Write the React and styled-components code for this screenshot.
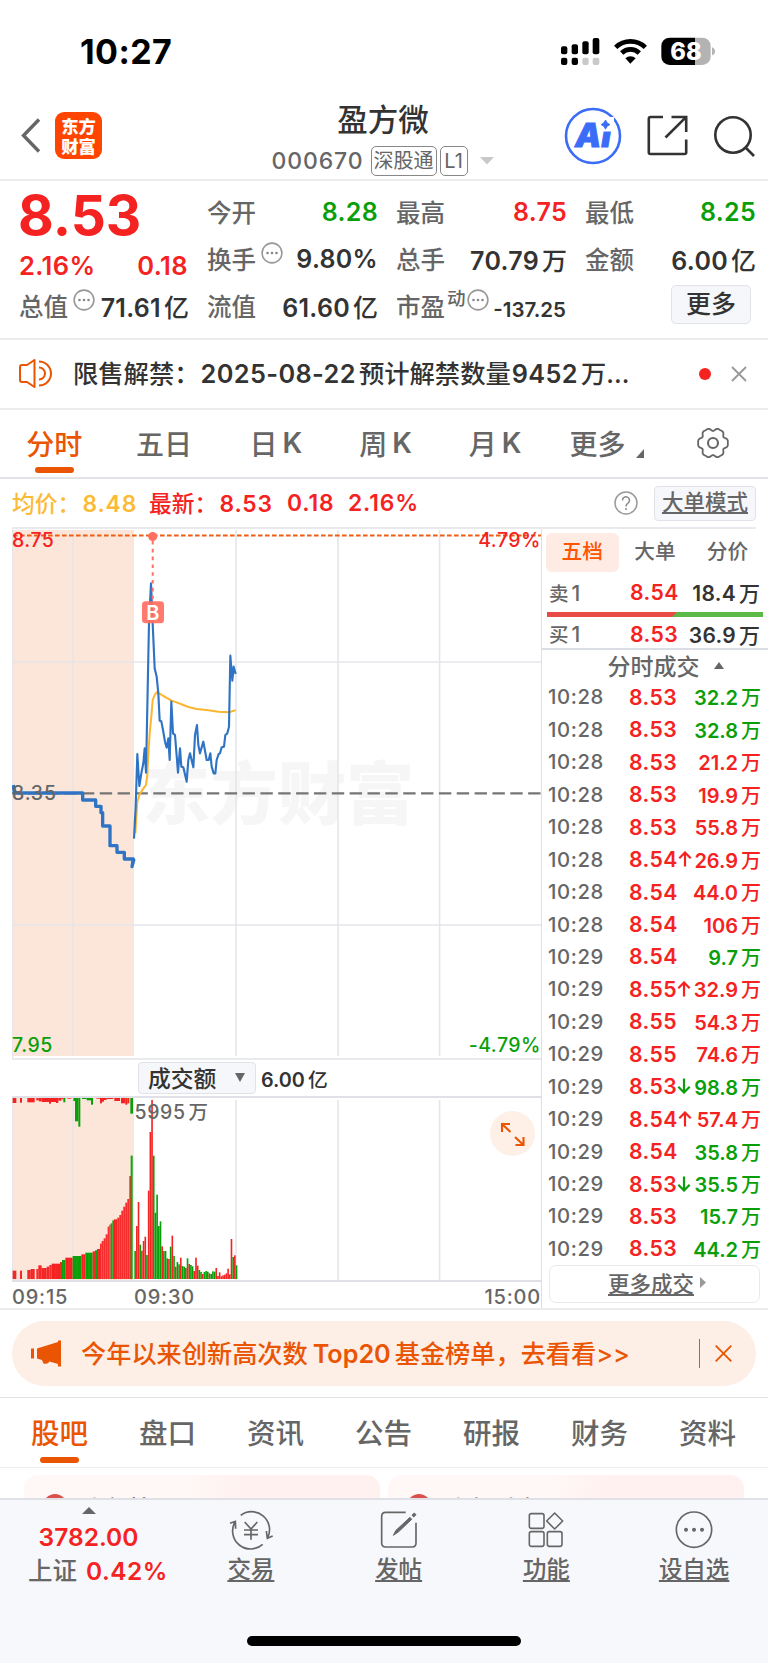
import React from 'react';
import styled, { createGlobalStyle } from 'styled-components';

const RED = '#f52222';
const GREEN = '#0a9f0a';
const ORANGE = '#ea5504';

const quotes = [
  [
    { label: '今开', value: '8.28', color: GREEN },
    { label: '最高', value: '8.75', color: RED },
    { label: '最低', value: '8.25', color: GREEN },
  ],
  [
    { label: '换手', value: '9.80%', tip: true },
    { label: '总手', value: '70.79', unit: '万' },
    { label: '金额', value: '6.00', unit: '亿' },
  ],
];

const trades = [
  ['10:28', '8.53', '', '32.2', 'g'],
  ['10:28', '8.53', '', '32.8', 'g'],
  ['10:28', '8.53', '', '21.2', 'r'],
  ['10:28', '8.53', '', '19.9', 'r'],
  ['10:28', '8.53', '', '55.8', 'r'],
  ['10:28', '8.54', 'up', '26.9', 'r'],
  ['10:28', '8.54', '', '44.0', 'r'],
  ['10:28', '8.54', '', '106', 'r'],
  ['10:29', '8.54', '', '9.7', 'g'],
  ['10:29', '8.55', 'up', '32.9', 'r'],
  ['10:29', '8.55', '', '54.3', 'r'],
  ['10:29', '8.55', '', '74.6', 'r'],
  ['10:29', '8.53', 'down', '98.8', 'g'],
  ['10:29', '8.54', 'up', '57.4', 'r'],
  ['10:29', '8.54', '', '35.8', 'g'],
  ['10:29', '8.53', 'down', '35.5', 'g'],
  ['10:29', '8.53', '', '15.7', 'g'],
  ['10:29', '8.53', '', '44.2', 'g'],
];

// x start, x end, bar top, color (3x units, baseline 717)
const preBars = [
  [38, 49, 692, 'r'], [60, 66, 692, 'r'], [82, 92, 690, 'r'], [92, 104, 687, 'r'],
  [109, 115, 687, 'r'], [115, 125, 676, 'r'], [125, 140, 684, 'r'], [140, 148, 680, 'r'],
  [148, 155, 675, 'r'], [155, 180, 671, 'r'], [180, 186, 666, 'r'], [186, 196, 660, 'g'],
  [196, 218, 653, 'r'], [218, 244, 648, 'g'], [244, 256, 643, 'r'], [256, 278, 638, 'g'],
  [278, 285, 634, 'r'], [285, 291, 631, 'g'], [291, 300, 627, 'r'], [300, 305, 611, 'r'],
  [305, 311, 603, 'r'], [311, 317, 595, 'r'], [317, 323, 583, 'r'], [323, 328, 560, 'r'],
  [328, 332, 554, 'r'], [332, 337, 550, 'g'], [337, 342, 541, 'g'], [342, 352, 538, 'r'],
  [352, 358, 533, 'r'], [358, 364, 525, 'r'], [364, 370, 512, 'r'], [370, 376, 500, 'r'],
  [376, 382, 488, 'r'], [382, 388, 477, 'r'], [388, 393, 408, 'r'], [392, 398, 347, 'g'],
];

// hanging bars under the top edge of the auction area
const topBars = [
  [38, 49, 189, 'r'], [60, 66, 188, 'r'], [82, 104, 187, 'r'], [109, 116, 181, 'r'],
  [116, 125, 184, 'r'], [125, 147, 186, 'r'], [147, 153, 191, 'r'], [153, 168, 186, 'r'],
  [168, 175, 189, 'r'], [175, 184, 182, 'r'], [184, 190, 178, 'r'], [190, 196, 187, 'g'],
  [202, 214, 176, 'r'], [220, 226, 183, 'g'], [225, 235, 244, 'g'], [235, 241, 260, 'g'],
  [246, 260, 177, 'g'], [260, 273, 181, 'g'], [273, 279, 194, 'g'], [289, 300, 176, 'r'],
  [300, 306, 190, 'r'], [306, 312, 185, 'r'], [312, 320, 180, 'r'], [320, 340, 177, 'r'],
  [343, 360, 183, 'r'], [363, 376, 190, 'r'], [376, 382, 194, 'r'], [382, 388, 190, 'r'],
  [391, 399, 221, 'g'],
];

const minuteBars =
  'g633 r558 r486 g614 r632 r603 r590 g645 r452 r276 r180 g347 g518 g464 g558 g544 r619 g633 g633 g655 r657 g620 r587 g648 r680 g666 g673 r653 g678 g680 r684 g655 r672 g675 g679 r693 r653 r677 g690 g696 r702 g696 g693 g695 r700 g702 g694 g695 r684 r708 r697 r709 r706 r704 r700 r686 r703 r597 g651 r646 g676'.split(' ');

const PRICE =
  '102,836 107,740 112,582 118,678 124,640 130,610 134,565 138,638 147,190 153,70 158,190 164,325 170,350 175,400 179,482 184,484 189,510 195,545 200,563 205,535 209,600 214,425 219,520 225,525 234,638 240,565 244,620 250,622 260,665 265,600 270,580 280,622 285,525 291,495 295,555 300,580 310,545 320,600 326,600 331,580 335,620 341,640 346,640 350,600 356,582 360,580 365,562 372,560 376,525 382,520 387,500 391,287 397,362 401,320 407,342';
const AVERAGE =
  '106,820 109,770 112,725 118,705 124,695 132,683 138,675 142,645 144,600 149,520 154,470 158,420 164,405 170,397 178,400 190,408 203,415 214,422 230,427 250,435 265,441 290,447 320,450 355,455 388,457 398,453 407,451';
const AUCTION =
  '40,435 43,459 248,459 248,480 287,480 287,499 303,499 303,518 308,518 308,558 330,558 330,617 351,617 351,637 373,637 373,657 400,657 396,680 402,657';

const gearPoints = Array.from({ length: 72 }, (_, i) => {
  const a = (i * Math.PI) / 36;
  const r = 14 + 1.4 * Math.cos(6 * a) - 0.6 * Math.cos(12 * a);
  return `${(17 + r * Math.cos(a)).toFixed(2)},${(17 + r * Math.sin(a)).toFixed(2)}`;
}).join(' ');

const tone = (c) => (c === 'g' ? '#0a9f0a' : '#f52222');

const Tip = () => (
  <TipIcon viewBox="0 0 22 22">
    <circle cx="11" cy="11" r="9.9" fill="none" stroke="#999" strokeWidth="1.6" />
    <circle cx="6.5" cy="11" r="1.3" fill="#888" />
    <circle cx="11" cy="11" r="1.3" fill="#888" />
    <circle cx="15.5" cy="11" r="1.3" fill="#888" />
  </TipIcon>
);

const StatusIcons = () => (
  <svg width="157" height="29" viewBox="530 110 471 87">
    <rect x="533" y="138" width="19" height="24" rx="6" />
    <rect x="565" y="132" width="19" height="30" rx="6" />
    <rect x="597" y="123" width="19" height="39" rx="6" />
    <rect x="628" y="113" width="20" height="49" rx="6" />
    <rect x="533" y="172" width="19" height="22" rx="6" />
    <rect x="565" y="172" width="19" height="22" rx="6" />
    <rect x="597" y="172" width="19" height="22" rx="6" fill="#c9c9c9" />
    <rect x="628" y="172" width="20" height="22" rx="6" fill="#c9c9c9" />
    <g fill="none" stroke="#000" strokeWidth="14">
      <path d="M697 141a64 64 0 0 1 89 0" />
      <path d="M715 158a38 38 0 0 1 53 0" />
    </g>
    <path d="M726 174a22 22 0 0 1 31 0l-16 16z" />
    <path d="M859 112h76v82h-76a25 25 0 0 1-25-25v-32a25 25 0 0 1 25-25z" />
    <path d="M935 112h22a25 25 0 0 1 25 25v32a25 25 0 0 1-25 25h-22z" fill="#b3b3b3" />
    <path d="M986 141q9 3 9 12t-9 12z" fill="#b3b3b3" />
    <text x="908" y="179" textAnchor="middle" fontFamily="Inter" fontSize="71" fontWeight="800" fill="#fff">68</text>
  </svg>
);

const PriceChart = () => (
  <svg width="530" height="529" viewBox="12 529 530 529">
    <rect x="13" y="530" width="121" height="526" fill="#fce6da" />
    <text x="142" y="819" fontFamily="Noto Sans CJK SC" fontWeight="900" fontSize="68" fill="#f6f6f7">东方财富</text>
    <g stroke="#e4e6ea" strokeWidth="1.6">
      <path d="M12.5 529V1058" />
      <path d="M73 530V1056M236 530V1056M338 530V1056M439.6 530V1056M13 662H541M13 925H541" />
    </g>
    <path d="M10.5 793.3H541" stroke="#757575" strokeWidth="2.2" strokeDasharray="12.4 5.45" />
    <path d="M13 535.4H541" stroke="#ee5e14" strokeWidth="2" strokeDasharray="4.6 2.4" />
    <g transform="translate(100 560) scale(.33333)" fill="none" strokeLinejoin="round">
      <polyline points={AVERAGE} stroke="#fcb52f" strokeWidth="6" />
      <polyline points={PRICE} stroke="#2f74c4" strokeWidth="6.4" />
    </g>
    <g transform="translate(0 640) scale(.33333)" fill="none">
      <polyline points={AUCTION} stroke="#2f74c4" strokeWidth="10" strokeLinejoin="round" />
    </g>
    <path d="M152.7 541V602" stroke="#ff6f61" strokeWidth="2" strokeDasharray="3.6 4.2" />
    <circle cx="152.7" cy="536.5" r="4.5" fill="#ff6f61" />
    <rect x="142" y="601.3" width="22" height="22" rx="3.5" fill="#ff6f61" fillOpacity=".92" />
    <text x="152.8" y="619.5" textAnchor="middle" fontFamily="Inter" fontWeight="600" fontSize="20" fill="#fff">B</text>
    <g fontFamily="Inter" fontSize="19.5" fontWeight="500" letterSpacing=".5">
      <text x="12" y="547" fill="#f52222">8.75</text>
      <text x="541" y="547" textAnchor="end" fill="#f52222">4.79%</text>
      <text x="12" y="800" letterSpacing=".8" fill="#666">8.35</text>
      <text x="12" y="1051.5" fill="#0a9f0a">7.95</text>
      <text x="541" y="1051.5" textAnchor="end" fill="#0a9f0a">-4.79%</text>
    </g>
  </svg>
);

const VolumeChart = () => (
  <svg width="530" height="182" viewBox="12 1098 530 182">
    <rect x="13" y="1098" width="121" height="182" fill="#fce6da" />
    <path d="M12.5 1098V1280M73 1100V1280M236 1100V1280M338 1100V1280M439.6 1100V1280" stroke="#e4e6ea" strokeWidth="1.6" />
    <g transform="translate(0 1040) scale(.33333)">
      {preBars.map(([x, end, y, c]) => (
        <rect key={x} x={x} y={y} width={end - x} height={717 - y} fill={tone(c)} />
      ))}
      {preBars.map(([x, end, y]) => (
        <path key={x} d={`M${(x + end) / 2} ${y}V717`} stroke="#fff" strokeOpacity=".2" strokeWidth="1" />
      ))}
      {topBars.map(([x, end, y, c]) => (
        <rect key={x} x={x} y="174" width={end - x} height={y - 174} fill={tone(c)} />
      ))}
      {minuteBars.map((bar, i) => (
        <rect key={i} x={403 + i * 5.07} y={bar.slice(1)} width="4.9" height={717 - bar.slice(1)} fill={tone(bar[0])} />
      ))}
    </g>
    <text x="134.5" y="1119" fontFamily="Inter, 'Noto Sans CJK SC'" fontSize="19.5" fontWeight="500" letterSpacing=".6" fill="#666">
      5995<tspan dx="3">万</tspan>
    </text>
    <circle cx="512.5" cy="1133.5" r="22.5" fill="#feefe7" />
    <g fill="none" stroke="#ea5504" strokeWidth="2.1">
      <path d="M502 1132V1124H510M502 1124L510.500 1132" />
      <path d="M523.500 1137V1145H515.500M523.500 1145L515 1137" />
    </g>
  </svg>
);

const App = () => (
  <Page>
    <GlobalStyle />
    <StatusBar>
      <Clock>10:27</Clock>
      <StatusIcons />
    </StatusBar>

    <Header>
      <HeaderLeft>
        <svg width="20" height="35" viewBox="0 0 20 35">
          <path d="M18 1.500L2.500 17.500L18 33.500" fill="none" stroke="#666" strokeWidth="3.4" />
        </svg>
        <Logo>
          <span>东方</span>
          <span>财富</span>
        </Logo>
      </HeaderLeft>
      <Heading>
        <StockName>盈方微</StockName>
        <StockCode>
          <span>000670</span>
          <Badge $w={66}>深股通</Badge>
          <Badge $w={28}>L1</Badge>
          <svg width="14" height="8" viewBox="0 0 14 8">
            <path d="M0 0H14L7 7.500z" fill="#c8c8c8" />
          </svg>
        </StockCode>
      </Heading>
      <HeaderRight>
        <svg width="58" height="58" viewBox="0 0 58 58">
          <circle cx="29" cy="29" r="27" fill="none" stroke="#3a6cf8" strokeWidth="2.6" />
          <text x="11" y="40.300" fontFamily="Inter" fontSize="33" fontWeight="900" fontStyle="italic" fill="#3a6cf8" stroke="#3a6cf8" strokeWidth=".8">Ai</text>
          <rect x="36" y="10" width="14" height="14.500" fill="#fff" />
          <path d="M41.500 13q1.100 3.500 4.500 4.600q-3.400 1.100-4.500 4.600q-1.100-3.500-4.500-4.600q3.400-1.100 4.500-4.600z" fill="#3a6cf8" stroke="#3a6cf8" strokeWidth=".8" />
        </svg>
        <svg width="41" height="41" viewBox="0 0 41 41" fill="none" stroke="#333" strokeWidth="2.6">
          <path d="M16 2H3.500Q1.800 2 1.800 3.700V37.500Q1.800 39 3.500 39H37.500Q39.200 39 39.200 37.500V24.500" />
          <path d="M24.500 2H39.200V17M38.500 2.700L18.500 22.500" />
        </svg>
        <svg width="42" height="42" viewBox="0 0 42 42" fill="none" stroke="#333" strokeWidth="2.6">
          <circle cx="20" cy="20" r="17.700" />
          <path d="M32 32L41 41" />
        </svg>
      </HeaderRight>
    </Header>

    <Quote>
      <QuoteMain>
        <BigPrice>8.53</BigPrice>
        <Change>
          <span>2.16%</span>
          <span>0.18</span>
        </Change>
        <QuoteCell>
          <QuoteLabel>总值</QuoteLabel>
          <Tip />
          <QuoteValue>71.61<Unit>亿</Unit></QuoteValue>
        </QuoteCell>
      </QuoteMain>
      <QuoteGrid>
        {quotes.flat().map((q) => (
          <QuoteCell key={q.label}>
            <QuoteLabel>{q.label}</QuoteLabel>
            {q.tip && <Tip />}
            <QuoteValue $color={q.color}>
              {q.value}
              {q.unit && <Unit>{q.unit}</Unit>}
            </QuoteValue>
          </QuoteCell>
        ))}
        <QuoteCell>
          <QuoteLabel>流值</QuoteLabel>
          <QuoteValue>61.60<Unit>亿</Unit></QuoteValue>
        </QuoteCell>
        <QuoteCell>
          <QuoteLabel>市盈</QuoteLabel>
          <Sup>动</Sup>
          <Tip />
          <SmallValue>-137.25</SmallValue>
        </QuoteCell>
        <QuoteCell>
          <MoreButton>更多</MoreButton>
        </QuoteCell>
      </QuoteGrid>
    </Quote>

    <Notice>
      <svg width="34" height="29" viewBox="0 0 34 29" fill="none" stroke={ORANGE} strokeWidth="2" strokeLinejoin="round">
        <path d="M3 6H8L15.500 1V28L8 23H3Q1 23 1 21V8Q1 6 3 6z" />
        <path d="M20 8.500a6 6 0 0 1 0 12M20 2.500a12 12 0 0 1 0 24" />
      </svg>
      <NoticeText>限售解禁：<b>2025-08-22</b>预计解禁数量<b>9452</b>万...</NoticeText>
      <RedDot />
      <svg width="16" height="16" viewBox="0 0 16 16">
        <path d="M1 1L15 15M15 1L1 15" stroke="#999" strokeWidth="1.9" />
      </svg>
    </Notice>

    <PeriodTabs>
      <PeriodTab $active>分时</PeriodTab>
      <PeriodTab>五日</PeriodTab>
      <PeriodTab>日<i>K</i></PeriodTab>
      <PeriodTab>周<i>K</i></PeriodTab>
      <PeriodTab>月<i>K</i></PeriodTab>
      <PeriodTab>
        更多
        <CornerMark viewBox="0 0 8 9"><path d="M8 0V9H0z" fill="#666" /></CornerMark>
      </PeriodTab>
      <PeriodTab>
        <svg width="34" height="34" viewBox="0 0 34 34" fill="none" stroke="#666" strokeWidth="1.8">
          <polygon points={gearPoints} strokeLinejoin="round" />
          <circle cx="17" cy="17" r="5" strokeWidth="2.1" />
        </svg>
      </PeriodTab>
    </PeriodTabs>

    <InfoRow>
      <InfoText $color="#fcbb36" $w={137}>均价：<span>8.48</span></InfoText>
      <InfoText $color={RED} $w={136}>最新：<span>8.53</span></InfoText>
      <InfoText $color={RED} $w={61}><span>0.18</span></InfoText>
      <InfoText $color={RED}><span>2.16%</span></InfoText>
      <HelpIcon viewBox="0 0 24 24">
        <circle cx="12" cy="12" r="11" fill="none" stroke="#999" strokeWidth="1.5" />
        <path d="M8.500 9.500a3.500 3.500 0 1 1 5.500 2.700q-2 1.300-2 3.300" fill="none" stroke="#888" strokeWidth="1.500" />
        <circle cx="12" cy="18" r="1" fill="#888" />
      </HelpIcon>
      <ModeButton>大单模式</ModeButton>
    </InfoRow>

    <Market>
      <ChartColumn>
        <PriceChart />
        <VolumeHead>
          <Dropdown>
            成交额
            <svg width="10" height="9" viewBox="0 0 10 9"><path d="M0 0H10L5 9z" fill="#666" /></svg>
          </Dropdown>
          <span>6.00<Unit>亿</Unit></span>
        </VolumeHead>
        <VolumeChart />
        <TimeAxis>
          <AxisLabel $w={122}>09:15</AxisLabel>
          <AxisLabel>09:30</AxisLabel>
          <AxisLabel $end>15:00</AxisLabel>
        </TimeAxis>
      </ChartColumn>

      <SideColumn>
        <BookTabs>
          <BookTab $active>五档</BookTab>
          <BookTab>大单</BookTab>
          <BookTab>分价</BookTab>
        </BookTabs>
        <BookRow>
          <BookName>卖<span>1</span></BookName>
          <Price>8.54</Price>
          <BookVolume>18.4<Unit>万</Unit></BookVolume>
        </BookRow>
        <RatioBar viewBox="0 0 216 5" preserveAspectRatio="none">
          <rect width="216" height="5" fill="#5bb947" />
          <path d="M0 0H130L125 5H0z" fill="#e84a45" />
        </RatioBar>
        <BookRow>
          <BookName>买<span>1</span></BookName>
          <Price>8.53</Price>
          <BookVolume>36.9<Unit>万</Unit></BookVolume>
        </BookRow>
        <TradeTitle>
          分时成交
          <svg width="10" height="7" viewBox="0 0 10 7"><path d="M5 0L10 7H0z" fill="#666" /></svg>
        </TradeTitle>
        <TradeList>
          {trades.map(([time, price, dir, volume, c], i) => (
            <TradeRow key={i}>
              <TradeTime>{time}</TradeTime>
              <Price>{price}</Price>
              {dir && (
                <Arrow viewBox="0 0 14 16" $down={dir === 'down'}>
                  <path d="M7 15.500V1.500M1.300 7.200L7 1.500L12.700 7.200" fill="none" stroke={dir === 'up' ? RED : GREEN} strokeWidth="2.2" />
                </Arrow>
              )}
              <TradeVolume $color={tone(c)}>{volume}<Unit>万</Unit></TradeVolume>
            </TradeRow>
          ))}
        </TradeList>
        <MoreTrades>
          <u>更多成交</u>
          <svg width="6" height="11" viewBox="0 0 6 11"><path d="M0 0L6 5.500L0 11z" fill="#999" /></svg>
        </MoreTrades>
      </SideColumn>
    </Market>

    <Banner>
      <svg width="31" height="27" viewBox="0 0 31 27" fill={ORANGE}>
        <path d="M0 8.500H3V18.500H0zM6 8.500L27 2V.5H30V26.500H27V24L18.500 21.500Q17 24.500 12.500 23.500L11 20L6 18.500z" />
      </svg>
      <BannerText>今年以来创新高次数<b>Top20</b>基金榜单，去看看&gt;&gt;</BannerText>
      <BannerRule />
      <svg width="17" height="17" viewBox="0 0 17 17">
        <path d="M.7 .7L16.300 16.300M16.300 .7L.7 16.300" stroke={ORANGE} strokeWidth="1.8" />
      </svg>
    </Banner>

    <SectionTabs>
      {['股吧', '盘口', '资讯', '公告', '研报', '财务', '资料'].map((name, i) => (
        <SectionTab key={name} $active={i === 0}>{name}</SectionTab>
      ))}
    </SectionTabs>

    <Cards>
      <Card>
        <CardDot />
        <span>人气榜</span>
      </Card>
      <Card>
        <CardDot />
        <span>人气看点</span>
      </Card>
    </Cards>

    <BottomBar>
      <IndexCell>
        <svg width="14" height="7" viewBox="0 0 14 7"><path d="M7 0L14 7H0z" fill="#666" /></svg>
        <IndexValue>3782.00</IndexValue>
        <IndexChange>上证<b>0.42%</b></IndexChange>
      </IndexCell>
      <NavItem>
        <svg width="44" height="40" viewBox="0 0 132 120" fill="none" stroke="#666" strokeWidth="5">
          <path d="M35 16A54 54 0 0 1 116 83M112 63L115 85L131 78" />
          <path d="M101 103A54 54 0 0 1 18 36M20 56L19 34L3 40" />
          <path d="M47 36L66 57L85 36M66 57V89M45 60H87M45 74H87" />
        </svg>
        <u>交易</u>
      </NavItem>
      <NavItem>
        <svg width="38" height="40" viewBox="0 0 114 120" fill="none" stroke="#666" strokeWidth="5">
          <path d="M77 7H17Q5 7 5 19V99Q5 111 17 111H97Q108 111 108 99V38" />
          <path d="M40 76L48 61L90 22L95 28L55 66z" fill="#666" strokeWidth="3" />
          <path d="M98 19L106 11" strokeWidth="10" />
        </svg>
        <u>发帖</u>
      </NavItem>
      <NavItem>
        <svg width="36" height="40" viewBox="0 0 108 120" fill="none" stroke="#666" strokeWidth="4.8" strokeLinejoin="round">
          <rect x="4" y="11" width="44" height="44" rx="6" />
          <rect x="4" y="65" width="44" height="44" rx="6" />
          <rect x="58" y="65" width="44" height="44" rx="6" />
          <path d="M80 9L104 33L80 57L56 33z" />
        </svg>
        <u>功能</u>
      </NavItem>
      <NavItem>
        <svg width="40" height="40" viewBox="0 0 120 120">
          <circle cx="60" cy="59" r="53" fill="none" stroke="#666" strokeWidth="5" />
          <circle cx="36" cy="59" r="6" fill="#666" />
          <circle cx="60" cy="59" r="6" fill="#666" />
          <circle cx="84" cy="59" r="6" fill="#666" />
        </svg>
        <u>设自选</u>
      </NavItem>
      <HomeIndicator />
    </BottomBar>
  </Page>
);

export default App;

const GlobalStyle = createGlobalStyle`
  * { box-sizing: border-box; }
  body {
    margin: 0;
    background: #fff;
    font-family: Inter, 'Noto Sans CJK SC', sans-serif;
    font-weight: 500;
    color: #333;
  }
  svg { display: block; flex-shrink: 0; }
`;

const Page = styled.div`
  width: 768px;
  height: 1663px;
  overflow: hidden;
  display: flex;
  flex-direction: column;
  white-space: nowrap;
  > * { flex-shrink: 0; }
`;

const StatusBar = styled.div`
  height: 90px;
  padding: 12px 51px 0 80px;
  display: flex;
  justify-content: space-between;
  align-items: center;
`;

const Clock = styled.div`
  font-size: 34px;
  font-weight: 700;
  color: #000;
  letter-spacing: 0.4px;
`;

const Header = styled.div`
  height: 91px;
  padding: 0 12px;
  display: grid;
  grid-template-columns: 1fr auto 1fr;
  align-items: center;
  border-bottom: 2px solid #ececee;
`;

const HeaderLeft = styled.div`
  display: flex;
  align-items: center;
  padding: 2px 0 0 9px;
  gap: 14px;
`;

const Logo = styled.div`
  width: 47px;
  height: 47px;
  border-radius: 9px;
  background: #ff4400;
  color: #fff;
  font: 900 17.300px/20px 'Noto Sans CJK SC', sans-serif;
  display: flex;
  flex-direction: column;
  align-items: center;
  justify-content: center;
`;

const Heading = styled.div`
  padding-top: 7px;
  display: flex;
  flex-direction: column;
  align-items: center;
`;

const StockName = styled.div`
  margin: 0 1px 0 -1px;
  font-size: 30.500px;
  font-weight: 500;
  line-height: 45px;
  color: #333;
`;

const StockCode = styled.div`
  display: flex;
  align-items: center;
  height: 37px;
  margin-left: -3px;
  padding-top: 1px;
  font-size: 23px;
  font-weight: 400;
  color: #666;
  > span {
    font-weight: 500;
    letter-spacing: 0.9px;
    margin-right: 7px;
  }
  svg { margin: 0 0 0 9px; }
`;

const Badge = styled.div`
  width: ${(p) => p.$w}px;
  height: 30px;
  margin-right: 3px;
  border: 1.5px solid #888;
  border-radius: 5px;
  font-size: 20px;
  line-height: 28px;
  text-align: center;
`;

const HeaderRight = styled.div`
  display: flex;
  justify-content: flex-end;
  align-items: center;
  gap: 25px;
  padding: 2px 1px 0 0;
`;

const Quote = styled.div`
  height: 159px;
  padding: 7px 13px 0 19px;
  display: flex;
  gap: 19px;
  border-bottom: 2px solid #ececee;
`;

const QuoteMain = styled.div`
  width: 169px;
`;

const BigPrice = styled.div`
  margin-left: -1px;
  font-size: 55px;
  font-weight: 700;
  line-height: 54px;
  height: 54px;
  color: #f52222;
`;

const Change = styled.div`
  height: 40px;
  padding-top: 7px;
  display: flex;
  justify-content: space-between;
  align-items: center;
  color: #f52222;
  font-size: 25.500px;
  font-weight: 600;
  letter-spacing: 0.4px;
`;

const QuoteGrid = styled.div`
  flex: 1;
  display: grid;
  grid-template-columns: repeat(3, 170px);
  column-gap: 19px;
  grid-auto-rows: 47px;
`;

const QuoteCell = styled.div`
  height: 47px;
  display: flex;
  align-items: center;
`;

const QuoteLabel = styled.div`
  font-size: 24.500px;
  color: #666;
`;

const QuoteValue = styled.div`
  margin-right: -1px;
  margin-left: auto;
  font-size: 25px;
  font-weight: 600;
  letter-spacing: 0.3px;
  color: ${(p) => p.$color || '#333'};
`;

const Unit = styled.span`
  margin-left: 3px;
  font-weight: 500;
  letter-spacing: 0;
`;

const SmallValue = styled.div`
  margin-left: auto;
  padding-top: 7px;
  font-size: 20.500px;
  font-weight: 600;
`;

const Sup = styled.span`
  font-size: 18.500px;
  color: #666;
  margin: -17px 0 0 2px;
`;

const TipIcon = styled.svg`
  width: 22px;
  height: 22px;
  margin: -11px 0 0 5px;
  ${Sup} + & { margin-left: 1px; }
`;

const MoreButton = styled.div`
  width: 80px;
  height: 39px;
  margin: -2px 4px 0 auto;
  border: 1.5px solid #e1e3e8;
  border-radius: 5px;
  background: #f6f7fa;
  font-size: 25px;
  line-height: 37px;
  font-weight: 500;
  text-align: center;
`;

const Notice = styled.div`
  height: 70px;
  padding: 0 21px 1px 19px;
  display: flex;
  align-items: center;
  border-bottom: 2px solid #ececee;
`;

const NoticeText = styled.div`
  flex: 1;
  margin: -3px 0 0 20px;
  font-size: 25.300px;
  b {
    font-weight: 600;
    letter-spacing: 0.4px;
    margin: 0 3px 0 1px;
  }
`;

const RedDot = styled.div`
  width: 12px;
  height: 12px;
  margin-right: 20px;
  border-radius: 50%;
  background: #f52222;
`;

const PeriodTabs = styled.div`
  height: 69px;
  display: grid;
  grid-template-columns: repeat(7, 1fr);
  border-bottom: 2px solid #e1e3e8;
`;

const PeriodTab = styled.div`
  position: relative;
  display: flex;
  justify-content: center;
  align-items: center;
  padding: 0 1px 2px 0;
  font-size: 28px;
  font-weight: 500;
  color: ${(p) => (p.$active ? '#ea5504' : '#666')};
  i {
    font-style: normal;
    font-weight: 600;
    margin: 0 -4px 0 5px;
  }
  &::after {
    content: '';
    display: ${(p) => (p.$active ? 'block' : 'none')};
    position: absolute;
    left: calc(50% - 20px);
    bottom: 4px;
    width: 39px;
    height: 6px;
    border-radius: 3px;
    background: #ea5504;
  }
`;

const CornerMark = styled.svg`
  width: 8px;
  height: 9px;
  margin: 22px -8px 0 11px;
`;

const InfoRow = styled.div`
  height: 50px;
  margin: 0 12px;
  display: flex;
  align-items: center;
  border-bottom: 2px solid #e9eaee;
`;

const InfoText = styled.div`
  width: ${(p) => (p.$w ? `${p.$w}px` : 'auto')};
  margin-top: -1px;
  font-size: 22.800px;
  color: ${(p) => p.$color};
  span {
    font-weight: 600;
    letter-spacing: 0.9px;
    margin-left: 2px;
  }
`;

const HelpIcon = styled.svg`
  width: 24px;
  height: 24px;
  margin: 0 16px 0 auto;
`;

const ModeButton = styled.div`
  width: 102px;
  height: 35px;
  border: 1.5px solid #e1e3e8;
  border-radius: 4px;
  background: #f6f7fa;
  color: #666;
  font-size: 21.500px;
  line-height: 31px;
  text-align: center;
  text-decoration: underline;
  text-decoration-thickness: 1.5px;
  text-underline-offset: 2px;
`;

const Market = styled.div`
  height: 781px;
  display: flex;
  border-bottom: 2px solid #ececee;
`;

const ChartColumn = styled.div`
  width: 542px;
  padding-left: 12px;
  border-right: 1px solid #dcdfe4;
  > svg { margin-right: -1px; }
`;

const VolumeHead = styled.div`
  height: 40px;
  border-top: 2px solid #e9eaee;
  border-bottom: 2px solid #dfe1e6;
  padding-left: 126px;
  display: flex;
  align-items: center;
  gap: 5px;
  font-size: 19.800px;
  font-weight: 600;
`;

const Dropdown = styled.div`
  width: 118px;
  height: 32px;
  padding: 0 10px 1px 9px;
  display: flex;
  align-items: center;
  justify-content: space-between;
  border: 1.5px solid #e1e3e8;
  border-radius: 4px;
  background: #f6f7fa;
  font-size: 22.800px;
  font-weight: 500;
`;

const TimeAxis = styled.div`
  height: 28px;
  border-top: 2px solid #dfe1e6;
  display: flex;
  align-items: center;
`;

const AxisLabel = styled.div`
  width: ${(p) => (p.$w ? `${p.$w}px` : 'auto')};
  margin-left: ${(p) => (p.$end ? 'auto' : 0)};
  padding-top: 3px;
  font-size: 20px;
  letter-spacing: 0.8px;
  color: #666;
`;

const SideColumn = styled.div`
  flex: 1;
  display: flex;
  flex-direction: column;
`;

const BookTabs = styled.div`
  height: 47px;
  padding: 4px 4px 4px 4px;
  display: flex;
`;

const BookTab = styled.div`
  width: 72.600px;
  height: 39px;
  border-radius: 6px;
  background: ${(p) => (p.$active ? '#feece4' : 'transparent')};
  color: ${(p) => (p.$active ? '#ff5500' : '#666')};
  font-size: 20.700px;
  font-weight: 500;
  line-height: 38px;
  text-align: center;
`;

const BookRow = styled.div`
  height: 35px;
  padding: 0 8px 2px 7px;
  display: flex;
  align-items: center;
`;

const BookName = styled.div`
  width: 81px;
  font-size: 19.500px;
  color: #666;
  span {
    margin-left: 3px;
    font-size: 21px;
  }
`;

const Price = styled.div`
  font-size: 21.200px;
  font-weight: 600;
  letter-spacing: 0.4px;
  color: #f52222;
`;

const BookVolume = styled.div`
  margin-left: auto;
  font-size: 21px;
  font-weight: 600;
  letter-spacing: 0.3px;
`;

const RatioBar = styled.svg`
  width: 216px;
  height: 5px;
  margin: 2px 0 0 5px;
`;

const TradeTitle = styled.div`
  height: 36px;
  margin-top: -4px;
  padding: 0 12px 3px 33px;
  display: flex;
  align-items: center;
  justify-content: center;
  gap: 14px;
  border-top: 2px solid #dadde3;
  font-size: 23px;
  color: #666;
`;

const TradeList = styled.div`
  padding-left: 6px;
  padding-right: 7px;
  margin-top: -3px;
`;

const TradeRow = styled.div`
  height: 32.450px;
  display: flex;
  align-items: center;
`;

const TradeTime = styled.div`
  width: 81px;
  font-size: 20.300px;
  letter-spacing: 0.6px;
  color: #666;
`;

const Arrow = styled.svg`
  width: 14px;
  height: 16px;
  transform: rotate(${(p) => (p.$down ? 180 : 0)}deg);
`;

const TradeVolume = styled.div`
  margin-left: auto;
  font-size: 20px;
  font-weight: 600;
  color: ${(p) => p.$color};
`;

const MoreTrades = styled.div`
  width: 211px;
  height: 39px;
  margin: auto 0 5px 7px;
  padding: 0 0 3px 5px;
  display: flex;
  align-items: center;
  justify-content: center;
  gap: 6px;
  border: 1.5px solid #e9eaee;
  border-radius: 7px;
  font-size: 21.500px;
  color: #666;
  u { text-underline-offset: 2px; text-decoration-thickness: 1.5px; }
`;

const Banner = styled.div`
  height: 65px;
  margin: 11px 12px;
  padding: 0 24px 0 19px;
  display: flex;
  align-items: center;
  border-radius: 33px;
  background: #fdeee6;
  color: #ea5504;
`;

const BannerText = styled.div`
  flex: 1;
  margin: -3px 0 0 19px;
  font-size: 25.200px;
  font-weight: 500;
  b { font-weight: 600; margin: 0 4px 0 5px; }
`;

const BannerRule = styled.div`
  width: 1.5px;
  height: 29px;
  margin-right: 15px;
  background: #ea5504;
`;

const SectionTabs = styled.div`
  height: 70px;
  padding: 0 6px;
  display: grid;
  grid-template-columns: repeat(7, 1fr);
  border-top: 1px solid #e3e3e5;
  box-shadow: 0 1px 0 #ececee;
`;

const SectionTab = styled(PeriodTab)`
  font-size: 28.500px;
`;

const Cards = styled.div`
  height: 31px;
  padding: 8px 24px 0;
  display: flex;
  gap: 8px;
  overflow: hidden;
`;

const Card = styled.div`
  width: 356px;
  height: 80px;
  padding: 19px 0 0 19px;
  display: flex;
  gap: 16px;
  border-radius: 14px 14px 0 0;
  background: linear-gradient(100deg, #fff8f6 45%, #fff1ef 60%);
  font-size: 23px;
  line-height: 34px;
  color: #444;
  span { margin-top: -2px; }
`;

const CardDot = styled.div`
  width: 24px;
  height: 24px;
  border-radius: 50%;
  background: #dc504b;
`;

const BottomBar = styled.div`
  position: relative;
  height: 165px;
  display: grid;
  grid-template-columns: 177px repeat(4, 1fr);
  border-top: 2px solid #dfe1e6;
  background: #f7f8fb;
`;

const IndexCell = styled.div`
  padding-top: 7px;
  display: flex;
  flex-direction: column;
  align-items: center;
`;

const IndexValue = styled.div`
  margin-top: 6px;
  font-size: 24.500px;
  line-height: 34px;
  font-weight: 600;
  color: #f52222;
`;

const IndexChange = styled.div`
  padding-left: 19px;
  font-size: 24.500px;
  line-height: 34px;
  color: #666;
  b {
    font-weight: 600;
    letter-spacing: 0.5px;
    margin-left: 9px;
    color: #f52222;
  }
`;

const NavItem = styled.div`
  padding-top: 10px;
  display: flex;
  flex-direction: column;
  align-items: center;
  font-size: 23.500px;
  line-height: 34px;
  color: #666;
  u {
    margin-top: 3px;
    text-underline-offset: 2px;
    text-decoration-thickness: 1.5px;
  }
`;

const HomeIndicator = styled.div`
  position: absolute;
  left: 247px;
  bottom: 17px;
  width: 274px;
  height: 10px;
  border-radius: 5px;
  background: #000;
`;
